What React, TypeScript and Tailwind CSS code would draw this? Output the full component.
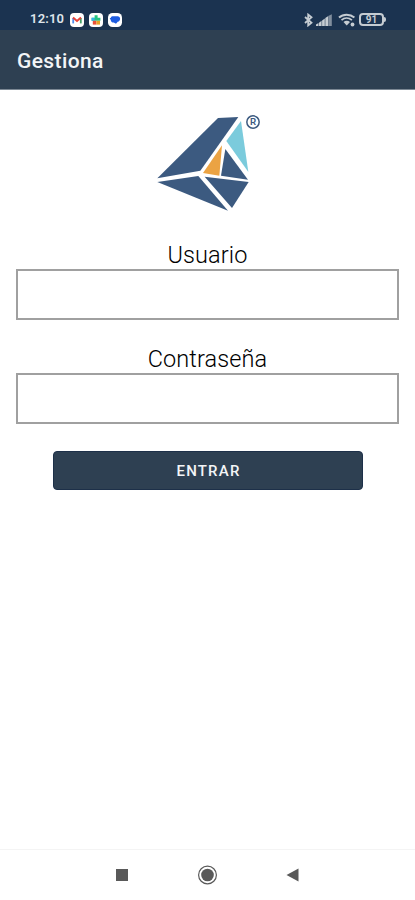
import React from "react";

const StatusBar: React.FC = () => {
  return (
    <div className="flex h-[30px] items-center justify-between bg-[#1b3350] pt-[9px] pl-[30px] pr-[29px]">
      <div className="flex items-center">
        <span className="-mt-px w-[35px] text-[13px] leading-5 font-semibold tracking-[0.2px] text-[#dfe5ea]">
          12:10
        </span>
        <div className="ml-[5px] flex items-center gap-[5px]">
          {/* Mail */}
          <svg width="14" height="14" viewBox="0 0 14 14">
            <rect width="14" height="14" rx="4" fill="#fff" />
            <path d="M3.2 10.4V5" stroke="#4b8df0" strokeWidth="1.8" />
            <path d="M10.8 10.4V5" stroke="#45a26a" strokeWidth="1.8" />
            <path d="M3 4.6l4 3.3 4-3.3" stroke="#e5433a" strokeWidth="2" fill="none" />
          </svg>
          {/* Store */}
          <svg width="14" height="14" viewBox="0 0 14 14">
            <rect width="14" height="14" rx="4" fill="#fff" />
            <path d="M5.600 2.200h3v2.600h2.800v3H2.600v-3h3z" fill="#25c481" />
            <path d="M2.600 4.800h3v3h-3z" fill="#35b5e8" />
            <path d="M3.800 7.800h3.600v3.800H3.800z" fill="#e8503a" />
            <path d="M7.400 7.800H11v3.800H7.400z" fill="#e7a126" />
          </svg>
          {/* Messages */}
          <svg width="14" height="14" viewBox="0 0 14 14">
            <rect width="14" height="14" rx="4.500" fill="#fff" />
            <path
              d="M4.400 3.200h5.200c1.500 0 2.500 1.100 2.500 2.600s-.9 2.800-2.400 3L8 10.800 5.800 9.600C4 9.600 2.900 8.600 2.700 7L1.700 5.100h1c.2-1.100.8-1.900 1.700-1.900z"
              fill="#1c5be0"
            />
          </svg>
        </div>
      </div>

      <div className="flex items-center text-[#c5ccd2]">
        {/* Bluetooth */}
        <svg width="10" height="14" viewBox="0 0 10 14" fill="none" stroke="currentColor" strokeWidth="1.8">
          <path d="M1 4l6.500 5.700-3.300 2.700V1.600l3.300 2.700L1 10" />
        </svg>
        {/* Mobile signal */}
        <svg className="ml-[2px]" width="16" height="12" viewBox="0 0 16 12" fill="currentColor">
          <path d="M0 10.500l2.500-1.500v3H0zM3 8.700l2.600-1.900V12H3zM6.100 6.400L8.800 4.500V12H6.100zM9.300 4.100L12 2.200V12H9.300z" />
          <path d="M12.200 2L15.800.2V12h-3.600z" opacity=".6" />
        </svg>
        {/* Wi-Fi */}
        <svg className="ml-[6px]" width="18" height="14" viewBox="0 0 18 14" fill="none" stroke="currentColor">
          <path d="M1 4.500c4.300-3.800 11-3.800 15.400 0" strokeWidth="2" />
          <path d="M3.500 7.100c3-2.600 7.200-2.600 10.400 0" strokeWidth="1.800" />
          <path d="M5.500 8.900c2-1.500 4.500-1.500 6.500 0L8.700 12.500z" fill="currentColor" stroke="none" />
          <circle cx="14.500" cy="11.500" r="1.900" fill="currentColor" stroke="none" />
        </svg>
        {/* Battery */}
        <div className="ml-[3px] flex items-center">
          <div className="flex h-[13px] w-[25px] items-center justify-center rounded-[4px] border-2 border-current text-[10px] leading-none font-bold">
            91
          </div>
          <div className="h-[5px] w-[2px] rounded-r-sm bg-current" />
        </div>
      </div>
    </div>
  );
};

const Logo: React.FC = () => {
  return (
    <svg width="120" height="115" viewBox="0 0 360 345">
      <g fill="#3c5a80">
        <path d="M22 220L204 39l61-3L151 197z" />
        <path d="M226 132l68 92-81-12z" />
        <path d="M164 215l132 16-50 78z" />
        <path d="M22 231l123-18 89 104z" />
      </g>
      <path d="M273 48l22 153-66-93z" fill="#7bcbdc" />
      <path d="M216 121l-8 91-49-8z" fill="#eba343" />
      <circle cx="309" cy="51" r="18.500" fill="none" stroke="#3c5a80" strokeWidth="4.500" />
      <text x="309" y="61" textAnchor="middle" fontSize="29" fontWeight="600" fill="#3c5a80">
        R
      </text>
    </svg>
  );
};

const Field: React.FC<{ label: string; type: string }> = ({ label, type }) => {
  return (
    <label className="block text-center">
      <span className="block h-[29px] text-[23.5px] leading-[30px] font-light tracking-[0.1px] text-black">
        {label}
      </span>
      <input
        type={type}
        className="block h-[51px] w-full border-2 border-[#a0a0a0] bg-white px-3 text-lg outline-none"
      />
    </label>
  );
};

const App: React.FC = () => {
  return (
    <div className="flex h-[900px] w-[415px] flex-col bg-white font-[Roboto,sans-serif]">
      <StatusBar />
      <header className="flex h-[60px] items-center border-b border-[#7c8894] bg-[#2e4052] pl-[17px] pt-[5px]">
        <h1 className="text-[21px] font-medium tracking-[0.4px] text-[#f3f5f7]">
          Gestiona
        </h1>
      </header>

      <main className="flex-1 px-4 pt-[15px]">
        <div className="flex justify-center pl-[5px]">
          <Logo />
        </div>
        <div className="mt-5 flex flex-col gap-6">
          <Field label="Usuario" type="text" />
          <Field label="Contraseña" type="password" />
        </div>
        <button className="mx-auto mt-[27px] block h-[39px] w-[310px] rounded-[4px] border border-[#1d3049] bg-[#2e4052] pt-[2px] pl-[2px] text-[15px] font-medium tracking-[1.2px] text-[#f3f5f7]">
          ENTRAR
        </button>
      </main>

      {/* System navigation */}
      <nav className="flex h-[51px] items-center justify-center border-t border-[#f4f4f4] pr-[2px] text-[#595959]">
        <svg width="186" height="20" viewBox="0 0 186 20" fill="currentColor">
          <path d="M2 4h12v12H2z" />
          <circle cx="93.500" cy="10" r="6.300" />
          <circle cx="93.500" cy="10" r="8.900" fill="none" stroke="currentColor" strokeWidth="1.200" />
          <path d="M172.500 10L184.500 3.500v13z" />
        </svg>
      </nav>
    </div>
  );
};

export default App;
